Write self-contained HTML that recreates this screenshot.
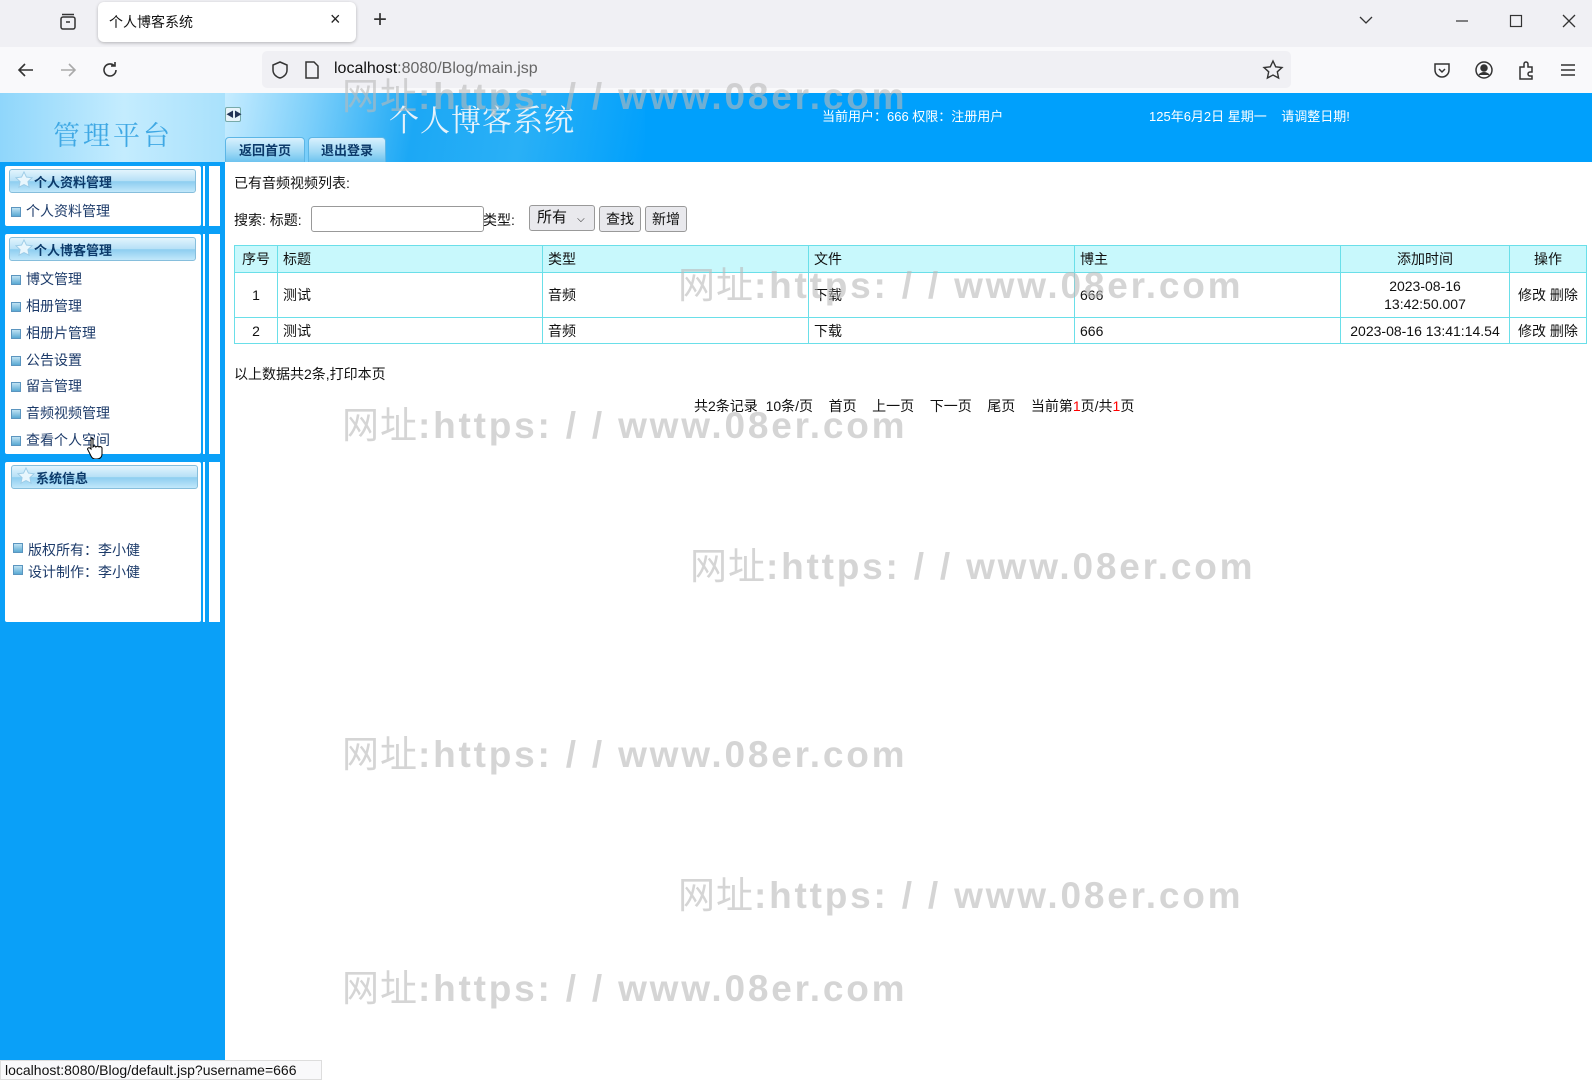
<!DOCTYPE html>
<html><head><meta charset="utf-8">
<style>
*{margin:0;padding:0;box-sizing:border-box}
body{width:1592px;height:1080px;overflow:hidden;position:relative;background:#fff;font-family:"Liberation Sans","Noto Sans CJK SC",sans-serif;font-size:14px;color:#111}
.a{position:absolute}
.tabbar{left:0;top:0;width:1592px;height:47px;background:#f0f0f4}
.nav{left:0;top:47px;width:1592px;height:46px;background:#f9f9fb}
.hdr{left:0;top:93px;width:1592px;height:69px;background:#00a0fc}
.side{left:0;top:162px;width:225px;height:918px;background:#0aa0f8}
.panel{background:#fff;border-radius:2px}
.ptitle{position:absolute;left:4px;top:3px;width:187px;height:24px;border:1px solid #86bedc;border-radius:3px;background:linear-gradient(#e2f4fd,#b6e0f6 50%,#8ccdf0 52%,#c2e8fa);font-weight:bold;font-size:13px;color:#0c3a6a;padding-left:24px;line-height:26px}
.star{position:absolute;left:5px;top:1px}
.item{position:absolute;left:6px;font-size:14px;color:#1d3b6a}
.item i{display:inline-block;width:10px;height:10px;background:linear-gradient(#bfe2f3,#5aa9d3);border:1px solid #5b95bf;margin-right:5px;vertical-align:-1px}
.br{position:absolute;width:17px;background:#fff}
.br b{position:absolute;left:2px;top:0;bottom:0;width:4px;background:#0aa0f8}
table{border-collapse:collapse;position:absolute;left:234px;top:245px;width:1353px}
td{border:1px solid #6adfe9;font-size:14px;padding:0 5px;height:26px}
tr.h td{background:#c8f8fc;height:27px}
.wm{position:absolute;font-size:37px;font-weight:bold;color:rgba(185,185,185,.6);white-space:nowrap;letter-spacing:2.8px}
.wm span{font-weight:normal;letter-spacing:1px}
.btn{position:absolute;border:1px solid #999;border-radius:3px;background:#e9e9ed;font-size:14px;text-align:center;line-height:24px;height:26px}
</style></head><body>
<div class="a tabbar"></div>
<svg class="a" style="left:58px;top:12px" width="20" height="20" viewBox="0 0 20 20" fill="none" stroke="#333" stroke-width="1.5"><rect x="3" y="5" width="14" height="12" rx="2"/><path d="M4 2.5h12M8 10h4"/></svg>
<div class="a" style="left:98px;top:2px;width:258px;height:40px;background:#fff;border-radius:6px;box-shadow:0 1px 3px rgba(0,0,0,.25)"></div>
<div class="a" style="left:109px;top:12px;font-size:14px">个人博客系统</div>
<div class="a" style="left:330px;top:9px;font-size:18px;color:#222">×</div>
<div class="a" style="left:373px;top:6px;font-size:24px;color:#333;font-weight:300">+</div>
<svg class="a" style="left:1358px;top:12px" width="16" height="16" viewBox="0 0 16 16" fill="none" stroke="#333" stroke-width="1.3"><path d="M2 5l6 6 6-6"/></svg>
<svg class="a" style="left:1454px;top:13px" width="16" height="16" fill="none" stroke="#333" stroke-width="1.2"><path d="M2 8h12"/></svg>
<svg class="a" style="left:1508px;top:13px" width="16" height="16" fill="none" stroke="#333" stroke-width="1.2"><rect x="2.5" y="2.5" width="11" height="11"/></svg>
<svg class="a" style="left:1561px;top:13px" width="16" height="16" fill="none" stroke="#333" stroke-width="1.3"><path d="M2 2l12 12M14 2L2 14"/></svg>
<div class="a nav"></div>
<svg class="a" style="left:16px;top:60px" width="20" height="20" fill="none" stroke="#333" stroke-width="1.6"><path d="M17 10H3M9 4L3 10l6 6"/></svg>
<svg class="a" style="left:58px;top:60px" width="20" height="20" fill="none" stroke="#aaa" stroke-width="1.6"><path d="M3 10h14M11 4l6 6-6 6"/></svg>
<svg class="a" style="left:100px;top:60px" width="20" height="20" fill="none" stroke="#333" stroke-width="1.6"><path d="M16 10a6 6 0 1 1-2-4.5M15 2v4h-4"/></svg>
<div class="a" style="left:262px;top:51px;width:1029px;height:37px;background:#f0f0f4;border-radius:5px"></div>
<svg class="a" style="left:270px;top:60px" width="20" height="20" fill="none" stroke="#333" stroke-width="1.5"><path d="M10 2l7 3v5c0 4-3 7-7 8-4-1-7-4-7-8V5z"/></svg>
<svg class="a" style="left:303px;top:60px" width="18" height="20" fill="none" stroke="#333" stroke-width="1.5"><path d="M3 2h8l4 4v12H3z"/></svg>
<div class="a" style="left:334px;top:60px;font-size:16px;color:#666"><span style="color:#111">localhost</span>:8080/Blog/main.jsp</div>
<svg class="a" style="left:1262px;top:59px" width="22" height="22" fill="none" stroke="#333" stroke-width="1.4"><path d="M11 2l2.7 5.8 6.3.7-4.7 4.3 1.3 6.2L11 16l-5.6 3 1.3-6.2L2 8.5l6.3-.7z"/></svg>
<svg class="a" style="left:1432px;top:60px" width="20" height="20" fill="none" stroke="#333" stroke-width="1.5"><path d="M3 4h14v6a7 7 0 0 1-14 0z"/><path d="M7 9l3 3 3-3"/></svg>
<svg class="a" style="left:1474px;top:60px" width="20" height="20" fill="none" stroke="#333" stroke-width="1.5"><circle cx="10" cy="10" r="8"/><circle cx="10" cy="8" r="3" fill="#333"/><path d="M5 15c3-3 7-3 10 0" fill="#333"/></svg>
<svg class="a" style="left:1516px;top:59px" width="20" height="22" fill="none" stroke="#333" stroke-width="1.5"><path d="M4 8h4V5a2 2 0 0 1 4 0v3h4v5h-2a2 2 0 0 0 0 4h2v3H4z"/></svg>
<svg class="a" style="left:1558px;top:60px" width="20" height="20" fill="none" stroke="#333" stroke-width="1.5"><path d="M3 5h14M3 10h14M3 15h14"/></svg>

<div class="a hdr"></div>
<div class="a" style="left:0;top:93px;width:225px;height:69px;background:linear-gradient(90deg,#8fd6fb,#c4ecfe 55%,#a9e1fc)"></div>
<div class="a" style="left:225px;top:93px;width:420px;height:69px;background:linear-gradient(100deg,#c6ecff 0%,#7fd0fa 20%,#1ca8f5 45%,#2ab0f6 70%,#00a0fc 100%)"></div>
<div class="a" style="left:53px;top:114px;font-size:27px;color:#3fa8e4;letter-spacing:3px;font-family:'Liberation Serif','Noto Serif CJK SC',serif">管理平台</div>
<div class="a" style="left:225px;top:107px;width:16px;height:15px;border:1px solid #7aa;background:#e8f4fa;border-radius:2px;font-size:8px;line-height:13px;text-align:center;color:#235">◀▶</div>
<div class="a" style="left:389px;top:96px;font-size:30px;color:#e6f2fa;font-family:'Liberation Serif','Noto Serif CJK SC',serif;letter-spacing:1px">个人博客系统</div>
<div class="a" style="left:225px;top:137px;width:80px;height:25px;border:1px solid #5cb6e6;border-bottom:none;border-radius:4px 4px 0 0;background:linear-gradient(#d9f1fd,#9ed8f5 60%,#6ec3ef);font-weight:bold;font-size:13px;color:#0c3a6a;text-align:center;line-height:26px">返回首页</div>
<div class="a" style="left:308px;top:137px;width:78px;height:25px;border:1px solid #5cb6e6;border-bottom:none;border-radius:4px 4px 0 0;background:linear-gradient(#d9f1fd,#9ed8f5 60%,#6ec3ef);font-weight:bold;font-size:13px;color:#0c3a6a;text-align:center;line-height:26px">退出登录</div>
<div class="a" style="left:822px;top:106px;font-size:13px;color:#fff">当前用户：666 权限：注册用户</div>
<div class="a" style="left:1149px;top:106px;font-size:13px;color:#fff">125年6月2日 星期一 &nbsp;&nbsp; 请调整日期!</div>

<div class="a side"></div>
<div class="a panel" style="left:5px;top:166px;width:196px;height:60px"><div class="ptitle"><svg class="star" width="18" height="18" viewBox="0 0 20 20"><path d="M10 1l2.7 5.8 6.3.7-4.7 4.3 1.3 6.2L10 15l-5.6 3 1.3-6.2L1 7.5l6.3-.7z" fill="#e8f6fd" stroke="#9ccbe6"/></svg>个人资料管理</div>
<div class="item" style="top:35px"><i></i>个人资料管理</div></div>
<div class="br" style="left:203px;top:166px;height:60px"><b></b></div>
<div class="a panel" style="left:5px;top:234px;width:196px;height:220px"><div class="ptitle"><svg class="star" width="18" height="18" viewBox="0 0 20 20"><path d="M10 1l2.7 5.8 6.3.7-4.7 4.3 1.3 6.2L10 15l-5.6 3 1.3-6.2L1 7.5l6.3-.7z" fill="#e8f6fd" stroke="#9ccbe6"/></svg>个人博客管理</div>
<div class="item" style="top:35px"><i></i>博文管理</div>
<div class="item" style="top:62px"><i></i>相册管理</div>
<div class="item" style="top:89px"><i></i>相册片管理</div>
<div class="item" style="top:116px"><i></i>公告设置</div>
<div class="item" style="top:142px"><i></i>留言管理</div>
<div class="item" style="top:169px"><i></i>音频视频管理</div>
<div class="item" style="top:196px"><i></i>查看个人空间</div></div>
<div class="br" style="left:203px;top:234px;height:220px"><b></b></div>
<div class="a panel" style="left:5px;top:462px;width:196px;height:160px"><div class="ptitle" style="left:6px"><svg class="star" width="18" height="18" viewBox="0 0 20 20"><path d="M10 1l2.7 5.8 6.3.7-4.7 4.3 1.3 6.2L10 15l-5.6 3 1.3-6.2L1 7.5l6.3-.7z" fill="#e8f6fd" stroke="#9ccbe6"/></svg>系统信息</div>
<div class="item" style="top:78px;left:8px"><i style="vertical-align:2px"></i>版权所有：李小健</div>
<div class="item" style="top:100px;left:8px"><i style="vertical-align:2px"></i>设计制作：李小健</div></div>
<div class="br" style="left:203px;top:462px;height:160px"><b></b></div>

<div class="a" style="left:234px;top:173px">已有音频视频列表:</div>
<div class="a" style="left:234px;top:210px">搜索: 标题:</div>
<div class="a" style="left:311px;top:206px;width:173px;height:26px;border:1px solid #999;border-radius:3px"></div>
<div class="a" style="left:483px;top:210px">类型:</div>
<div class="btn" style="left:529px;top:205px;width:66px;text-align:left;padding-left:7px;font-size:15px">所有 <span style="font-size:10px;margin-left:6px">⌵</span></div>
<div class="btn" style="left:599px;top:206px;width:42px">查找</div>
<div class="btn" style="left:645px;top:206px;width:42px">新增</div>
<table>
<tr class="h"><td style="width:43px;text-align:center">序号</td><td style="width:265px">标题</td><td style="width:266px">类型</td><td style="width:266px">文件</td><td style="width:266px">博主</td><td style="width:169px;text-align:center">添加时间</td><td style="text-align:center">操作</td></tr>
<tr style="height:45px"><td style="text-align:center">1</td><td>测试</td><td>音频</td><td>下载</td><td>666</td><td style="text-align:center;line-height:18px">2023-08-16<br>13:42:50.007</td><td style="text-align:center">修改 删除</td></tr>
<tr><td style="text-align:center">2</td><td>测试</td><td>音频</td><td>下载</td><td>666</td><td style="text-align:center">2023-08-16 13:41:14.54</td><td style="text-align:center">修改 删除</td></tr>
</table>
<div class="a" style="left:234px;top:364px">以上数据共2条,打印本页</div>
<div class="a" style="left:694px;top:396px;white-space:nowrap">共2条记录&nbsp; 10条/页 &nbsp;&nbsp; 首页 &nbsp;&nbsp; 上一页 &nbsp;&nbsp; 下一页 &nbsp;&nbsp; 尾页 &nbsp;&nbsp; 当前第<span style="color:red">1</span>页/共<span style="color:red">1</span>页</div>

<div class="wm" style="left:342px;top:66px"><span>网址</span>:https: / / www.08er.com</div>
<div class="wm" style="left:678px;top:255px"><span>网址</span>:https: / / www.08er.com</div>
<div class="wm" style="left:342px;top:395px"><span>网址</span>:https: / / www.08er.com</div>
<div class="wm" style="left:690px;top:536px"><span>网址</span>:https: / / www.08er.com</div>
<div class="wm" style="left:342px;top:724px"><span>网址</span>:https: / / www.08er.com</div>
<div class="wm" style="left:678px;top:865px"><span>网址</span>:https: / / www.08er.com</div>
<div class="wm" style="left:342px;top:958px"><span>网址</span>:https: / / www.08er.com</div>

<svg class="a" style="left:86px;top:437px" width="18" height="22" viewBox="0 0 18 22"><path d="M5 1c1 0 2 1 2 2v7l1-1c1 0 2 0 2 1 1-1 2-1 3 0 1-1 3 0 3 1v6c0 3-2 5-5 5H9c-2 0-3-1-4-3L2 13c-1-1 0-3 2-2l1 1V3c0-1 0-2 0-2z" fill="#fff" stroke="#000"/></svg>
<div class="a" style="left:0;top:1060px;width:322px;height:20px;background:#f9f9fb;border:1px solid #ddd;font-size:14px;padding-left:4px;line-height:19px">localhost:8080/Blog/default.jsp?username=666</div>
</body></html>
